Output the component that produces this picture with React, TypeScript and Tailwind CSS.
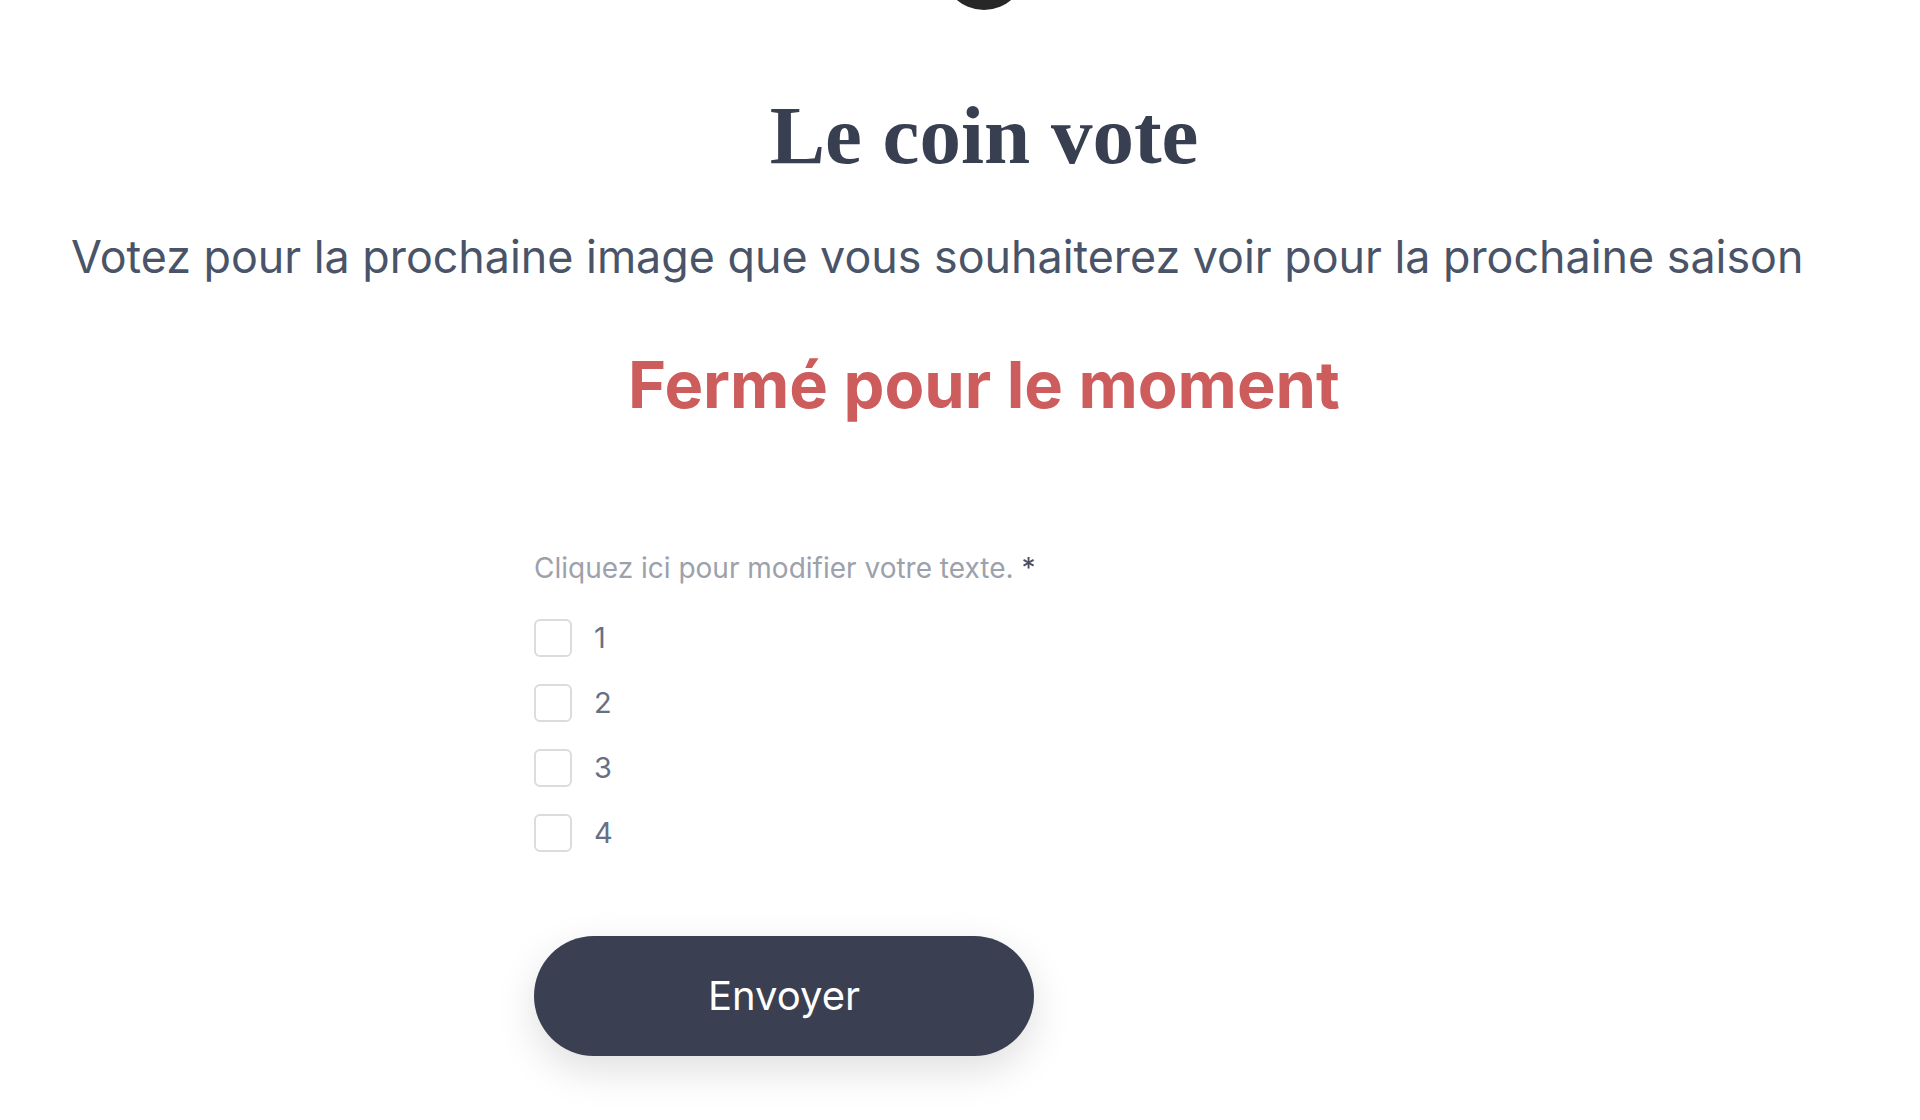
const options = ["1", "2", "3", "4"];

function Checkbox({ label }: { label: string }) {
  return (
    <label className="flex h-[38px] cursor-pointer items-center gap-[22px]">
      <span className="h-[38px] w-[38px] rounded-[6px] border-2 border-[#dadce0] bg-white" />
      <span className="text-[29px] leading-[34px] text-[#667085]">{label}</span>
    </label>
  );
}

export default function App() {
  return (
    <div className="min-h-screen overflow-hidden bg-white font-['Inter',sans-serif]">
      <main className="flex flex-col items-center pl-[48px]">
        {/* logo, mostly scrolled out of view */}
        <div className="mt-[-74px] h-[84px] w-[84px] rounded-full bg-[#272727]" />

        <h1 className="mt-[75px] font-['Liberation_Serif',serif] text-[83px] font-bold leading-[100px] text-[#383f51]">
          Le coin vote
        </h1>

        <p className="mt-[45px] ml-[23px] self-start whitespace-nowrap text-[44.8px] leading-[54px] text-[#4a5468]">
          Votez pour la prochaine image que vous souhaiterez voir pour la prochaine saison
        </p>

        <h2 className="mt-[61px] text-[65px] font-bold leading-[80px] text-[#cd5c5c]">
          Fermé pour le moment
        </h2>

        <form className="mt-[126px] flex w-[900px] flex-col pb-[65px]">
          <p className="text-[28px] leading-[34px] text-[#9ca1ab]">
            Cliquez ici pour modifier votre texte. <span className="text-[#4b5060]">*</span>
          </p>

          <div className="mt-[34px] flex flex-col gap-[27px]">
            {options.map((o) => (
              <Checkbox key={o} label={o} />
            ))}
          </div>

          <button
            type="button"
            className="mt-[84px] h-[120px] w-[500px] rounded-full bg-[#3a3f51] text-[40px] text-white shadow-[0_14px_40px_rgba(0,0,0,0.13)]"
          >
            Envoyer
          </button>
        </form>
      </main>
    </div>
  );
}
